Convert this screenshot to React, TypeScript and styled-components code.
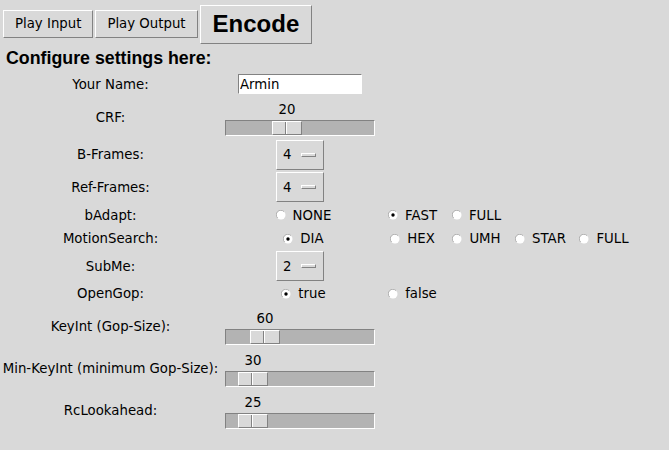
import React from "react";
import styled, { createGlobalStyle } from "styled-components";

const GlobalStyle = createGlobalStyle`
  html, body {
    margin: 0;
    padding: 0;
    background: #d9d9d9;
  }
  body {
    font-family: "DejaVu Sans", sans-serif;
    font-size: 13.3px;
    color: #000;
  }
`;

const Window = styled.div`
  width: 669px;
  height: 450px;
  background: #d9d9d9;
  overflow: hidden;
`;

const Toolbar = styled.div`
  display: flex;
  align-items: center;
  gap: 2px;
  height: 48px;
  padding-left: 3px;
`;

const Button = styled.button<{ $big?: boolean }>`
  height: ${(p) => (p.$big ? 39 : 28)}px;
  margin: 0;
  padding: 0 ${(p) => (p.$big ? 12 : 11)}px;
  background: #d9d9d9;
  border: 1px solid;
  border-color: #ffffff #828282 #828282 #ffffff;
  border-radius: 0;
  font-family: ${(p) => (p.$big ? '"Liberation Sans", Arial, sans-serif' : '"DejaVu Sans", sans-serif')};
  font-size: ${(p) => (p.$big ? 24 : 13.3)}px;
  font-weight: ${(p) => (p.$big ? 700 : 400)};
  color: #000;
  line-height: 1;
`;

const Heading = styled.h1`
  margin: 0;
  padding-left: 6px;
  height: 24px;
  line-height: 24px;
  font: bold 17.8px "Liberation Sans", Arial, sans-serif;
`;

const Form = styled.div`
  display: flex;
  flex-direction: column;
`;

const Row = styled.div<{ $h: number }>`
  display: grid;
  grid-template-columns: 224px 152px 66px 62px 66px 61px;
  height: ${(p) => p.$h}px;
  align-items: center;
  justify-items: center;
`;

const Label = styled.span`
  padding-right: 3px;
  line-height: 15px;
  white-space: nowrap;
`;

const Entry = styled.input`
  width: 124px;
  height: 20px;
  box-sizing: border-box;
  margin: 0;
  padding: 0 1px;
  border: 1px solid;
  border-color: #828282 #ffffff #ffffff #828282;
  background: #fff;
  font: 13.3px "DejaVu Sans", sans-serif;
  color: #000;
  outline: none;
`;

const ScaleBox = styled.div`
  width: 150px;
  height: 42px;
  box-sizing: border-box;
  padding-top: 6px;
  display: flex;
  flex-direction: column;
`;

const ScaleValue = styled.div`
  width: 30px;
  height: 15px;
  line-height: 15px;
  text-align: center;
`;

const Trough = styled.div`
  position: relative;
  margin-top: 3px;
  height: 16px;
  box-sizing: border-box;
  background: #b3b3b3;
  border: 1px solid;
  border-color: #828282 #ffffff #ffffff #828282;
`;

const Thumb = styled.div`
  position: absolute;
  top: 0;
  width: 30px;
  height: 14px;
  box-sizing: border-box;
  background: #d9d9d9;
  border: 1px solid;
  border-color: #ffffff #828282 #828282 #ffffff;

  &::after {
    content: "";
    position: absolute;
    left: 12px;
    top: 0;
    bottom: 0;
    width: 1px;
    background: #828282;
    border-right: 1px solid #ffffff;
  }
`;

const MenuButton = styled.div`
  width: 48px;
  height: 30px;
  box-sizing: border-box;
  display: flex;
  align-items: center;
  gap: 10px;
  padding-left: 6px;
  border: 1px solid;
  border-color: #ffffff #828282 #828282 #ffffff;
  line-height: 15px;
`;

const MenuIndicator = styled.span`
  width: 15px;
  height: 4px;
  box-sizing: border-box;
  border: 1px solid;
  border-color: #ffffff #828282 #828282 #ffffff;
`;

const RadioLabel = styled.label`
  display: inline-flex;
  align-items: center;
  gap: 7px;
  padding-left: 7px;
  line-height: 15px;
  white-space: nowrap;
`;

interface ScaleProps {
  value: number;
  from: number;
  to: number;
}

const Scale = ({ value, from, to }: ScaleProps) => {
  const left = Math.round(((value - from) / (to - from)) * 118);
  return (
    <ScaleBox>
      <div style={{ paddingLeft: left + 1 }}>
        <ScaleValue>{value}</ScaleValue>
      </div>
      <Trough>
        <Thumb style={{ left }} />
      </Trough>
    </ScaleBox>
  );
};

const OptionMenu = ({ value }: { value: string }) => (
  <MenuButton>
    <span>{value}</span>
    <MenuIndicator />
  </MenuButton>
);

const Radio = ({ text, checked }: { text: string; checked?: boolean }) => (
  <RadioLabel>
    <svg width="10" height="10" viewBox="0 0 10 10">
      <circle cx="5" cy="5" r="4.5" fill="#ffffff" />
      <path d="M1.6 8 A4.4 4.4 0 0 1 8 1.6" stroke="#b0b0b0" strokeWidth="1" fill="none" />
      {checked && <circle cx="5" cy="5" r="1.7" fill="#000" />}
    </svg>
    {text}
  </RadioLabel>
);

const App = () => {
  return (
    <Window>
      <GlobalStyle />
      <Toolbar>
        <Button>Play Input</Button>
        <Button>Play Output</Button>
        <Button $big>Encode</Button>
      </Toolbar>
      <Heading>Configure settings here:</Heading>
      <Form>
        <Row $h={24}>
          <Label>Your Name:</Label>
          <Entry defaultValue="Armin" />
        </Row>
        <Row $h={42}>
          <Label>CRF:</Label>
          <Scale value={20} from={0} to={51} />
        </Row>
        <Row $h={33}>
          <Label>B-Frames:</Label>
          <OptionMenu value="4" />
        </Row>
        <Row $h={32}>
          <Label>Ref-Frames:</Label>
          <OptionMenu value="4" />
        </Row>
        <Row $h={24}>
          <Label>bAdapt:</Label>
          <Radio text="NONE" />
          <Radio text="FAST" checked />
          <Radio text="FULL" />
        </Row>
        <Row $h={23}>
          <Label>MotionSearch:</Label>
          <Radio text="DIA" checked />
          <Radio text="HEX" />
          <Radio text="UMH" />
          <Radio text="STAR" />
          <Radio text="FULL" />
        </Row>
        <Row $h={32}>
          <Label>SubMe:</Label>
          <OptionMenu value="2" />
        </Row>
        <Row $h={23}>
          <Label>OpenGop:</Label>
          <Radio text="true" checked />
          <Radio text="false" />
        </Row>
        <Row $h={42}>
          <Label>KeyInt (Gop-Size):</Label>
          <Scale value={60} from={0} to={300} />
        </Row>
        <Row $h={42}>
          <Label>Min-KeyInt (minimum Gop-Size):</Label>
          <Scale value={30} from={0} to={300} />
        </Row>
        <Row $h={42}>
          <Label>RcLookahead:</Label>
          <Scale value={25} from={0} to={250} />
        </Row>
      </Form>
    </Window>
  );
};

export default App;
